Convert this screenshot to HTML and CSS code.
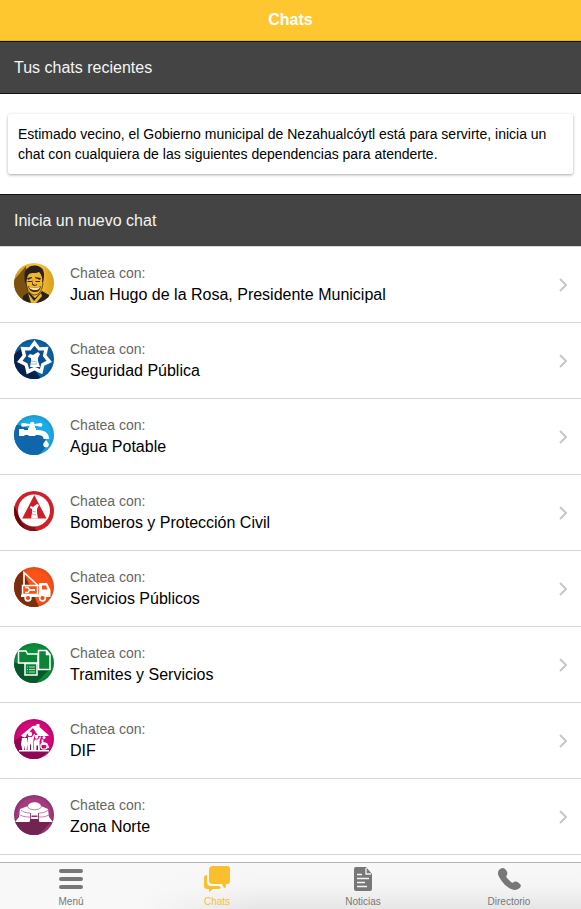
FILE: index.html
```html
<!DOCTYPE html>
<html lang="es">
<head>
<meta charset="utf-8">
<meta name="viewport" content="width=device-width, initial-scale=1">
<title>Chats</title>
<link rel="stylesheet" href="styles.css">
</head>
<body>
<header class="topbar"><h1 class="topbar-title">Chats</h1></header>
<main class="content">
  <h2 class="divider">Tus chats recientes</h2>
  <p class="card">Estimado vecino, el Gobierno municipal de Nezahualcóytl está para servirte, inicia un chat con cualquiera de las siguientes dependencias para atenderte.</p>
  <h2 class="divider divider-list">Inicia un nuevo chat</h2>
  <ul class="list">
    <li><a class="item" href="#presidente">
      <svg class="avatar" viewBox="0 0 40 40" aria-hidden="true">
        <defs><linearGradient id="gold"><stop offset="0" stop-color="#d49a1c"/><stop offset=".55" stop-color="#fbc640"/><stop offset="1" stop-color="#d89d1c"/></linearGradient>
        <clipPath id="round"><circle cx="20" cy="20" r="20"/></clipPath></defs>
        <g clip-path="url(#round)">
          <rect width="40" height="40" fill="url(#gold)"/>
          <path d="M12 3 0 17v23h15z" fill="#7b5110"/>
          <path d="M8 40 9 33l6-4 6 6 7-7 7 4 3 8z" fill="#27221e"/>
          <path d="m14 30 6 8 7-8 1 3-6 7h-5z" fill="#efb52d"/>
          <path d="M12 13c0-4 3-7 9-7 6 0 9 3 9 8l-1 8c-1 6-4 10-8 10s-7-4-8-10z" fill="#f2b52e"/>
          <path d="M11 20c-1-8-1-13 3-15 3-3 8-3 12-1 4 2 5 7 3 16l-1-1c1-4-1-8-3-10-4 2-7 0-10 2-2 2-2 5-3 9z" fill="#29221b"/>
          <path d="m13 15 5-1v1l-4 2zm8-1 6 1-1 2-5-2zM13 18h5v1h-4zm8 0h5v1h-4zM19 16l-1 6 3 1 2-1v-1l-2 1-2-1z" fill="#3d2b15"/>
          <path d="M14 23c4 2 9 2 13 0-1 5-3 6-6 6-4 0-6-2-7-6z" fill="#4b3415"/>
          <path d="M15 24c4 1 8 1 11 0-1 3-3 3-5 3s-5 0-6-3z" fill="#ffe4a0"/>
          <path d="M12 20c1 6 3 11 8 12 5 0 8-4 9-12" fill="none" stroke="#49320e" stroke-width=".8"/>
        </g>
      </svg>
      <span class="item-text"><span class="item-hint">Chatea con:</span><span class="item-name">Juan Hugo de la Rosa, Presidente Municipal</span></span>
      <svg class="chevron" viewBox="0 0 8 14" aria-hidden="true"><path d="m1 1 6 6-6 6"/></svg>
    </a></li>
    <li><a class="item" href="#seguridad">
      <svg class="avatar" viewBox="0 0 40 40" aria-hidden="true">
        <defs><radialGradient id="blue"><stop offset=".75" stop-color="#0d66aa"/><stop offset="1" stop-color="#0a5592"/></radialGradient></defs>
        <g clip-path="url(#round)">
          <rect width="40" height="40" fill="url(#blue)"/>
          <path d="M0 15 7 10l20 30H0z" fill="#06224f"/>
          <g transform="translate(20.5 19)">
            <path id="star" d="M0-18 5.200-10.800 14-11.200 12-2.700 17.500 4 9.800 7.800 7.800 16.200 0 12.500-7.800 16.200-9.800 7.800-17.500 4-12-2.700-14-11.200-5.200-10.800z" fill="#fff"/>
            <path d="M0-12.200 4-7.400 9.600-7.600 8.300-1.900 12 2.700 6.900 5.400 5.400 11 0 8.700-5.400 11-6.900 5.400-12 2.700-8.300-1.900-9.600-7.600-4-7.400z" fill="#0b4e8d"/>
          </g>
          <path d="m14 17 2-2 3 1 5-3 2 2-2 4v3l2 6h-10l1-6v-3l-3-1z" fill="#fff"/>
          <path d="m17 22 6 1m-6 2h6" stroke="#6790b8" stroke-width=".6"/>
        </g>
      </svg>
      <span class="item-text"><span class="item-hint">Chatea con:</span><span class="item-name">Seguridad Pública</span></span>
      <svg class="chevron" viewBox="0 0 8 14" aria-hidden="true"><path d="m1 1 6 6-6 6"/></svg>
    </a></li>
    <li><a class="item" href="#agua">
      <svg class="avatar" viewBox="0 0 40 40" aria-hidden="true">
        <defs><radialGradient id="sky"><stop offset=".8" stop-color="#1dabe6"/><stop offset="1" stop-color="#1897d2"/></radialGradient></defs>
        <g clip-path="url(#round)">
          <rect width="40" height="40" fill="url(#sky)"/>
          <path d="M0 10h5l24 8 5 12-9 10H0z" fill="#0f67aa"/>
          <g fill="#fff">
            <path d="M5 14h5v1h4v-2h1v-2h6v2h1v2c6 0 13 1 13 9h-5.500c0-3-2-4-7-4h-1v1h-7v-1h-4v1H5z"/>
            <path d="M16 12V10.600L9 11.700C6.500 12 6.500 7.700 9 8l7 1c0-3 4.500-3 4.500 0l6-1c2.500-.3 2.500 4 0 3.700l-6-1.100V12z"/>
            <path d="M32 25c2 2.500 2.800 3.200 2.800 4.400a2.800 2.800 0 0 1-5.600 0c0-1.200 1-1.900 2.800-4.400z"/>
          </g>
        </g>
      </svg>
      <span class="item-text"><span class="item-hint">Chatea con:</span><span class="item-name">Agua Potable</span></span>
      <svg class="chevron" viewBox="0 0 8 14" aria-hidden="true"><path d="m1 1 6 6-6 6"/></svg>
    </a></li>
    <li><a class="item" href="#bomberos">
      <svg class="avatar" viewBox="0 0 40 40" aria-hidden="true">
        <g clip-path="url(#round)">
          <rect width="40" height="40" fill="#cf202a"/>
          <path d="M0 14 8 32l16 8H0z" fill="#65090e"/><path d="m8 32 16-2-4 10-9-2z" fill="#86141a"/>
          <circle cx="20" cy="19.500" r="16" fill="#fff"/>
          <path d="M20.300 4 32.500 27.500H8.200z" fill="#cb202a"/>
          <path d="m16 16 1-1 2 1 4-3 2 1-2 4v4l1 5.500h-7l1-5.500v-4l-2-1z" fill="#fff"/>
          <path d="m18 20 4 1m-4 2 4 1" stroke="#d98084" stroke-width=".7"/>
        </g>
      </svg>
      <span class="item-text"><span class="item-hint">Chatea con:</span><span class="item-name">Bomberos y Protección Civil</span></span>
      <svg class="chevron" viewBox="0 0 8 14" aria-hidden="true"><path d="m1 1 6 6-6 6"/></svg>
    </a></li>
    <li><a class="item" href="#servicios">
      <svg class="avatar" viewBox="0 0 40 40" aria-hidden="true">
        <defs><radialGradient id="orange"><stop offset=".8" stop-color="#fb5219"/><stop offset="1" stop-color="#e34612"/></radialGradient></defs>
        <g clip-path="url(#round)">
          <rect width="40" height="40" fill="url(#orange)"/>
          <path d="M9 4 0 10v30h25z" fill="#792e0f"/>
          <path d="M10 18V5.500L24.500 19" fill="none" stroke="#fff" stroke-width="1.600"/>
          <path d="M8.500 18.500h15v9h-15z" fill="#f65219" stroke="#fff" stroke-width="1.500"/>
          <path d="M25 16h8l3.500 7v7H7v-2.500h18z" fill="#fff"/>
          <path d="M28 18.500h4l1.500 4H28z" fill="#f65219"/>
          <path d="M15 23h6" stroke="#fff" stroke-width="1.800"/>
          <path d="M11 20.500h3l1.500 2.500-1.500 2.500h-3" fill="none" stroke="#fff" stroke-width="1.400"/>
          <g fill="#e84d19" stroke="#fff" stroke-width="1.600"><circle cx="14" cy="31" r="2.900"/><circle cx="28.500" cy="31" r="2.900"/></g>
        </g>
      </svg>
      <span class="item-text"><span class="item-hint">Chatea con:</span><span class="item-name">Servicios Públicos</span></span>
      <svg class="chevron" viewBox="0 0 8 14" aria-hidden="true"><path d="m1 1 6 6-6 6"/></svg>
    </a></li>
    <li><a class="item" href="#tramites">
      <svg class="avatar" viewBox="0 0 40 40" aria-hidden="true">
        <defs><radialGradient id="green"><stop offset=".8" stop-color="#0b8f3b"/><stop offset="1" stop-color="#087d32"/></radialGradient></defs>
        <g clip-path="url(#round)">
          <rect width="40" height="40" fill="url(#green)"/>
          <path d="M5 20 35 27 22 40H0V20z" fill="#08572b"/>
          <g fill="#0b8437" stroke="#fff" stroke-width="1.500">
            <path d="M4.500 20V8H12l1.500 3H24v9z"/>
            <path d="M24.500 7.500h8l3.500 4V26.500H24.500z"/><path d="M32.500 7.500v4H36" fill="#fff"/>
            <path d="M11 20.500h12V32H11z"/>
          </g>
          <path d="M13 24h1m1 0h6m-8 2.500h1m1 0h6M13 29h1m1 0h6" stroke="#b8ddb4" stroke-width="1"/>
        </g>
      </svg>
      <span class="item-text"><span class="item-hint">Chatea con:</span><span class="item-name">Tramites y Servicios</span></span>
      <svg class="chevron" viewBox="0 0 8 14" aria-hidden="true"><path d="m1 1 6 6-6 6"/></svg>
    </a></li>
    <li><a class="item" href="#dif">
      <svg class="avatar" viewBox="0 0 40 40" aria-hidden="true">
        <defs><radialGradient id="pink"><stop offset=".8" stop-color="#d4087a"/><stop offset="1" stop-color="#b80669"/></radialGradient></defs>
        <g clip-path="url(#round)">
          <rect width="40" height="40" fill="url(#pink)"/>
          <path d="M0 22 9 16l26 16-10 8H0z" fill="#8d0754"/>
          <path d="m7 16.500 11.500-9.500 4-.5V5h3v3l9.500 8.500-2 .5H21l-3-5.500-7 5.500-2 1z" fill="#fff"/>
          <path d="m12.500 16 6.500-7 4.500 7z" fill="#d4087a"/>
          <g fill="#fff"><circle cx="10.500" cy="16.500" r="1.900"/><circle cx="16" cy="15" r="2.200"/><circle cx="22.500" cy="18" r="1.800"/><circle cx="30" cy="18.500" r="1.500"/>
          <path d="M8 19h5l.5 6-1 6.500H11l-.5-5-.5 5H8.500L7 25zM14 18h4l2-3h1l-1.500 5.500V31.500H17v-6h-1v6h-2.500v-8zM21 20.500h3l2-3h1l-1.500 5 .5 9H24v-5h-1.500v5h-2.500v-9z"/>
          <path d="M5 31h30v1.600H5z"/></g>
          <path d="M28.500 20.500V25h4l2 4" fill="none" stroke="#fff" stroke-width="1.800"/><circle cx="30" cy="27" r="3.200" fill="none" stroke="#fff" stroke-width="1.300"/>
        </g>
      </svg>
      <span class="item-text"><span class="item-hint">Chatea con:</span><span class="item-name">DIF</span></span>
      <svg class="chevron" viewBox="0 0 8 14" aria-hidden="true"><path d="m1 1 6 6-6 6"/></svg>
    </a></li>
    <li><a class="item" href="#norte">
      <svg class="avatar" viewBox="0 0 40 40" aria-hidden="true">
        <defs><radialGradient id="plum"><stop offset=".8" stop-color="#a53b7f"/><stop offset="1" stop-color="#8d3069"/></radialGradient></defs>
        <g clip-path="url(#round)">
          <rect width="40" height="40" fill="url(#plum)"/>
          <path d="m3 26 4-12 30 13-12 13H0V26z" fill="#712451"/>
          <path d="m1 27 4-5 1-8 8-3c1-5 12-5 13 0l7 3 1 8 4 5H25.500l-1-3h-8l-1 3z" fill="#fff"/>
          <g fill="none" stroke="#a9649a" stroke-width=".8">
            <path d="M13.500 11c0 5 14 5 14 0M7 15c2 2 5 3 9 3m18-3c-2 2-5 3-9 3M6 20c4 2 7 2 10 2m19-2c-4 2-7 2-10 2"/>
          </g>
          <path d="M17.500 20.500h6v1.500h-6z" fill="#92306c"/><path d="M16.500 18v7m8-7v7" stroke="#92306c" stroke-width=".9"/>
        </g>
      </svg>
      <span class="item-text"><span class="item-hint">Chatea con:</span><span class="item-name">Zona Norte</span></span>
      <svg class="chevron" viewBox="0 0 8 14" aria-hidden="true"><path d="m1 1 6 6-6 6"/></svg>
    </a></li>
  </ul>
</main>
<nav class="tabs" aria-label="Principal">
  <a class="tab" href="#menu">
    <svg class="tab-icon" viewBox="0 0 32 32" aria-hidden="true"><path d="M6 8h20M6 16h20M6 24h20" stroke="currentColor" stroke-width="4" stroke-linecap="round"/></svg>
    <span>Menú</span>
  </a>
  <a class="tab tab-active" href="#chats" aria-current="page">
    <svg class="tab-icon" viewBox="0 0 32 32" aria-hidden="true"><g fill="currentColor"><path d="M12 3h14q3 0 3 3v12q0 3-3 3h-1q0 3-1 4.500-2-1.500-3-4.500h-9q-4 0-4-4V7q0-4 4-4z"/><path d="M6 12v7q0 4 4 4h8l2 2q-1 1-3 1h-5l-4 3v-3H6q-3 0-3-3v-8q0-3 3-3z"/></g></svg>
    <span>Chats</span>
  </a>
  <a class="tab" href="#noticias">
    <svg class="tab-icon" viewBox="0 0 32 32" aria-hidden="true"><path d="M9 4h10l6 7v15q0 2-2 2H9q-2 0-2-2V6q0-2 2-2z" fill="currentColor"/><path d="M19 5v6h5M10 11.500h5M10 15.500h12M10 19.500h8M10 23.500h10" fill="none" stroke="#f4f4f4" stroke-width="1.300"/></svg>
    <span>Noticias</span>
  </a>
  <a class="tab" href="#directorio">
    <svg class="tab-icon" viewBox="0 0 32 32" aria-hidden="true"><path d="M6 7c2-2 4-3 6-1s3 4 2 6c-1 1-1 2 0 3l4 4c1 1 2 1 3 0 2-1 4 0 6 2s0 4-2 5c-3 2-7 1-13-4C7 16 3 11 6 7z" fill="currentColor"/></svg>
    <span>Directorio</span>
  </a>
</nav>
</body>
</html>
```
FILE: styles.css
```css
* { box-sizing: border-box; }

body {
  margin: 0;
  height: 100vh;
  display: flex;
  flex-direction: column;
  overflow: hidden;
  background: #fff;
  color: #000;
  font-family: "Liberation Sans", Arial, sans-serif;
  font-size: 16px;
}

a { color: inherit; text-decoration: none; }

.topbar {
  flex: none;
  background: #ffc72f;
  border-bottom: 1px solid #e6b22a;
  text-align: center;
}

.topbar-title {
  margin: 0;
  color: #fff;
  font-size: 16px;
  line-height: 40px;
}

.content {
  flex: 1;
  min-height: 0;
  overflow: auto;
  scrollbar-width: none;
}

.divider {
  margin: 0;
  padding: 16px 14px 15px;
  border: 1px solid #111;
  border-width: 1px 0;
  background: #444;
  color: #f5f5f5;
  font-size: 16px;
  font-weight: 400;
  line-height: 20px;
}

.divider-list { border-bottom-color: #d6d6d6; }

.card {
  margin: 20px 8px;
  padding: 10px;
  border-radius: 2px;
  background: #fff;
  box-shadow: 0 1px 3px rgba(0, 0, 0, 0.35);
  font-size: 14px;
  line-height: 20px;
}

.list {
  margin: 0;
  padding: 0;
  list-style: none;
}

.item {
  display: flex;
  align-items: center;
  gap: 16px;
  height: 76px;
  padding: 0 14px;
  border-bottom: 1px solid #d6d6d6;
}

.avatar {
  flex: none;
  width: 40px;
  height: 40px;
  margin-bottom: 4px;
}

.item-text {
  flex: 1;
  display: flex;
  flex-direction: column;
}

.item-hint {
  color: #666;
  font-size: 14px;
  line-height: 20px;
}

.item-name { line-height: 24px; }

.chevron {
  width: 8px;
  height: 14px;
  fill: none;
  stroke: #c7c7c7;
  stroke-width: 2;
}

.tabs {
  flex: none;
  display: flex;
  margin: 0 -1px 0 -2px;
  border-top: 1px solid #b2b2b2;
  background: linear-gradient(100deg, #f8f8f8 25%, transparent 45%), linear-gradient(#f8f8f8, #f5f5f5 50%, #e6e6e6);
  color: #777;
}

.tab {
  flex: 1;
  display: flex;
  flex-direction: column;
  align-items: center;
  font-size: 10px;
  line-height: 14px;
}

.tab-active { color: #fbbf2d; }

.tab-icon {
  width: 32px;
  height: 32px;
}
```
